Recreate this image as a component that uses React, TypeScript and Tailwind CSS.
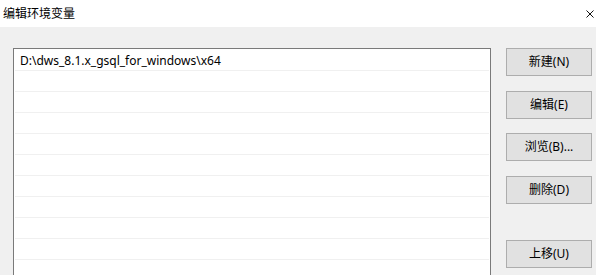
const FONT = '"Segoe UI", "Noto Sans", "Noto Sans CJK SC", sans-serif';

const buttons = [
  { label: "新建(N)", mt: "mt-0" },
  { label: "编辑(E)", mt: "mt-[15px]" },
  { label: "浏览(B)...", mt: "mt-[14px]" },
  { label: "删除(D)", mt: "mt-[15px]" },
  { label: "上移(U)", mt: "mt-[36px]" },
];

const rows = ["D:\\dws_8.1.x_gsql_for_windows\\x64", "", "", "", "", "", "", "", "", "", "", ""];

export default function App() {
  return (
    <div
      className="w-[596px] h-[275px] bg-[#f0f0f0] overflow-hidden text-[12px] text-black"
      style={{ fontFamily: FONT }}
    >
      <div className="h-[27px] bg-white flex items-center justify-between pl-[3px] pr-[2px]">
        <span className="leading-none">编辑环境变量</span>
        <svg width="8" height="8" viewBox="0 0 8 8">
          <path d="M0.5 0.5 L7.5 7.5 M7.5 0.5 L0.5 7.5" stroke="#111" strokeWidth="1" />
        </svg>
      </div>

      <div className="flex pt-[21px] pl-[13px] gap-[15px]">
        <div className="w-[478px] h-[260px] shrink-0 border border-[#7a7a7a] bg-white p-[1px] overflow-hidden">
          {rows.map((r, i) => (
            <div
              key={i}
              className="h-[21px] border-b border-[#f0f0f0] pl-[5px] pt-[1px] flex items-center leading-none"
            >
              {r}
            </div>
          ))}
        </div>

        <div className="flex flex-col w-[86px]">
          {buttons.map((b) => (
            <div
              key={b.label}
              className={`${b.mt} h-[28px] border border-[#adadad] bg-[#e1e1e1] flex items-center justify-center leading-none`}
            >
              {b.label}
            </div>
          ))}
        </div>
      </div>
    </div>
  );
}
